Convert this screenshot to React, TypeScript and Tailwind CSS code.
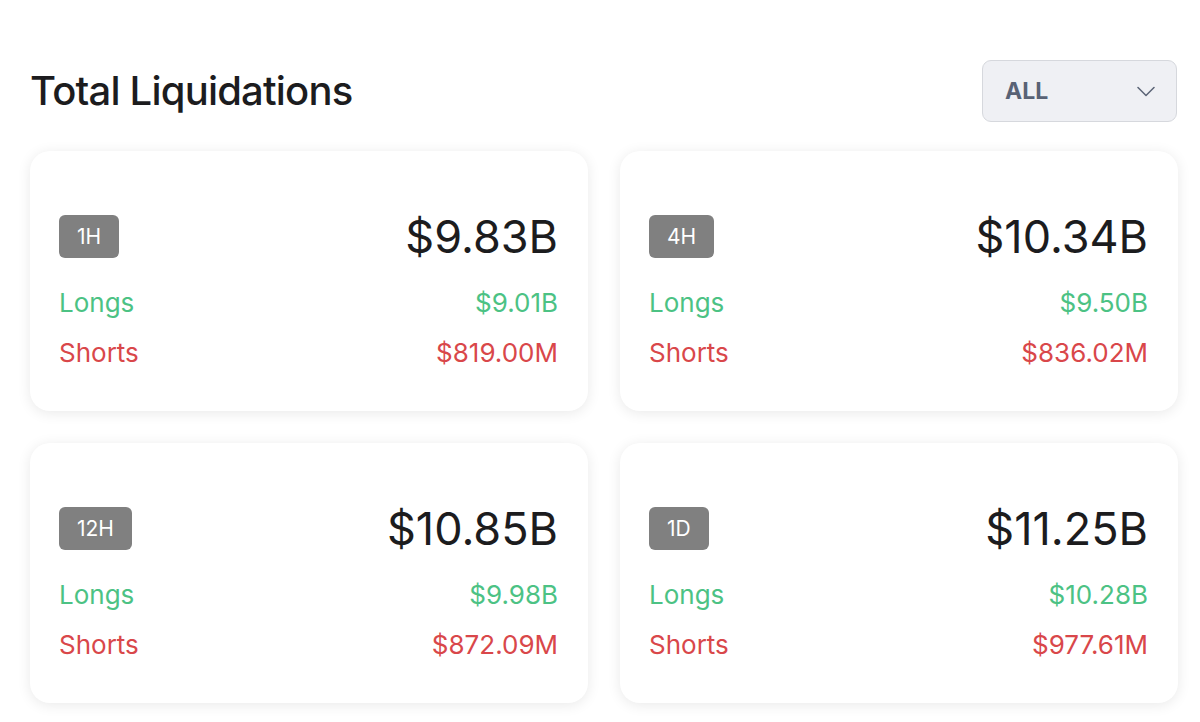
type Stat = {
  label: string;
  total: string;
  longs: string;
  shorts: string;
};

const stats: Stat[] = [
  { label: '1H', total: '$9.83B', longs: '$9.01B', shorts: '$819.00M' },
  { label: '4H', total: '$10.34B', longs: '$9.50B', shorts: '$836.02M' },
  { label: '12H', total: '$10.85B', longs: '$9.98B', shorts: '$872.09M' },
  { label: '1D', total: '$11.25B', longs: '$10.28B', shorts: '$977.61M' },
];

function StatCard({ stat }: { stat: Stat }) {
  return (
    <div className="h-[260px] rounded-[20px] bg-white px-[30px] pt-[60px] shadow-[0_2px_14px_rgba(0,0,0,0.09)]">
      <div className="flex h-[51px] items-center justify-between">
        <span className="ml-[-1px] flex h-[43px] items-center rounded-[6px] bg-[#808080] px-[18px] text-[21px] text-white">
          {stat.label}
        </span>
        <span className="text-[45px] leading-none text-[#1c1c1e]">{stat.total}</span>
      </div>
      <div className="mt-[15px] flex h-[50px] items-center justify-between text-[26px] text-[#4cc284]">
        <span className="ml-[-1px]">Longs</span>
        <span>{stat.longs}</span>
      </div>
      <div className="flex h-[50px] items-center justify-between text-[26px] text-[#d9474a]">
        <span className="ml-[-1px]">Shorts</span>
        <span>{stat.shorts}</span>
      </div>
    </div>
  );
}

export default function App() {
  return (
    <div className="min-h-[722px] bg-white pl-[30px] pr-[22px] pt-[60px] font-['Inter',sans-serif]">
      <div className="flex items-center justify-between">
        <h1 className="text-[40px] font-medium tracking-[-0.8px] text-[#1c1c1e]">Total Liquidations</h1>
        <button className="mr-[1px] flex h-[62px] w-[195px] items-center justify-between rounded-[9px] border border-[#d6d8dd] bg-[#eff0f4] pl-[22px] pr-[21px]">
          <span className="text-[23px] font-bold text-[#596275]">ALL</span>
          <svg width="18" height="11" viewBox="0 0 18 11" fill="none">
            <path d="M1 1.5 L9 9.5 L17 1.5" stroke="#596275" strokeWidth="1.5" strokeLinecap="round" strokeLinejoin="round" />
          </svg>
        </button>
      </div>
      <div className="mt-[29px] grid grid-cols-2 gap-x-[32px] gap-y-[32px]">
        {stats.map((s) => (
          <StatCard key={s.label} stat={s} />
        ))}
      </div>
    </div>
  );
}
